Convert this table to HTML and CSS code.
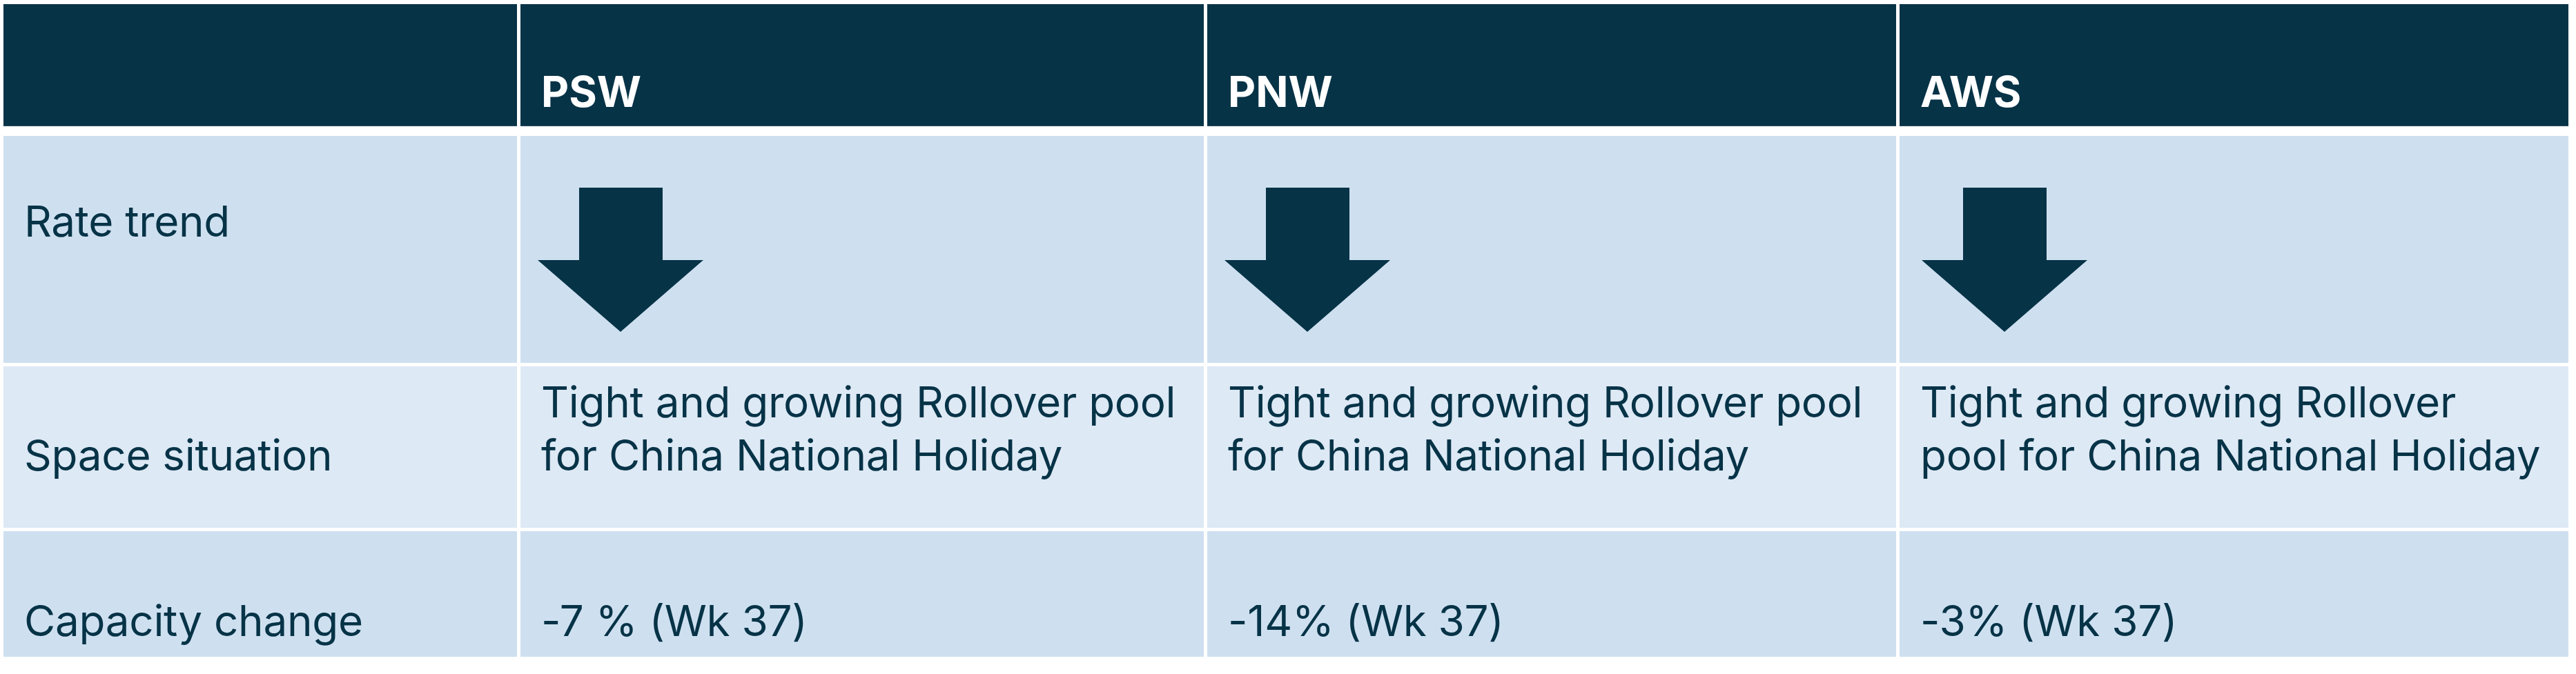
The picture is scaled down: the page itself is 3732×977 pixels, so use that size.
FILE: index.html
```html
<!DOCTYPE html>
<html lang="en">
<head>
<meta charset="utf-8">
<title>Rate overview</title>
<link rel="stylesheet" href="styles.css">
</head>
<body>
<div class="table">
  <div class="head">
    <div class="hcell"></div>
    <div class="hcell">PSW</div>
    <div class="hcell">PNW</div>
    <div class="hcell">AWS</div>
  </div>
  <div class="body">
    <div class="cell row-trend label">Rate trend</div>
    <div class="cell row-trend"><svg class="arrow" viewBox="0 0 240 209" width="240" height="209"><polygon points="60,0 181,0 181,105 240,105 120,209 0,105 60,105"/></svg></div>
    <div class="cell row-trend"><svg class="arrow" viewBox="0 0 240 209" width="240" height="209"><polygon points="60,0 181,0 181,105 240,105 120,209 0,105 60,105"/></svg></div>
    <div class="cell row-trend"><svg class="arrow arrow-aws" viewBox="0 0 240 209" width="240" height="209"><polygon points="60,0 181,0 181,105 240,105 120,209 0,105 60,105"/></svg></div>

    <div class="cell row-space label">Space situation</div>
    <div class="cell row-space">Tight and growing Rollover pool for China National Holiday</div>
    <div class="cell row-space">Tight and growing Rollover pool for China National Holiday</div>
    <div class="cell row-space">Tight and growing Rollover pool for China National Holiday</div>

    <div class="cell row-cap label">Capacity change</div>
    <div class="cell row-cap">-7 % (Wk 37)</div>
    <div class="cell row-cap">-14% (Wk 37)</div>
    <div class="cell row-cap">-3% (Wk 37)</div>
  </div>
</div>
</body>
</html>
```

FILE: styles.css
```css
* { box-sizing: border-box; }

html, body {
  margin: 0;
  background: #ffffff;
}

body {
  padding: 6px 0 0 5px;
  font-family: Inter, "Liberation Sans", sans-serif;
  color: #073347;
}

.table {
  width: 3716px;
}

.head,
.body {
  display: grid;
  grid-template-columns: 744px 990px 998px 969px;
  column-gap: 5px;
}

.head {
  height: 177px;
  margin-bottom: 14px;
}

.hcell {
  background: #073347;
  border-bottom: 1px solid #2b4d5e;
  color: #ffffff;
  font-weight: 700;
  font-size: 62px;
  line-height: 77px;
  padding: 0 30px 11px 30px;
  display: flex;
  align-items: flex-end;
}

.body {
  grid-template-rows: 329px 234px 182px;
  row-gap: 5px;
}

.cell {
  font-size: 62px;
  line-height: 77px;
  padding: 0 30px 0 30px;
  letter-spacing: -0.3px;
}

.row-trend {
  background: #cee0f0;
  padding-top: 85px;
}

.row-trend .arrow {
  display: block;
  fill: #073347;
  margin: -10px 0 0 -5px;
}

.row-trend .arrow-aws {
  margin-left: 2px;
}

.row-space {
  background: #dde9f5;
  padding-top: 13px;
}

.row-space.label {
  padding-top: 90px;
}

.row-cap {
  background: #cee0f0;
  display: flex;
  align-items: flex-end;
  padding-bottom: 14px;
}
```
